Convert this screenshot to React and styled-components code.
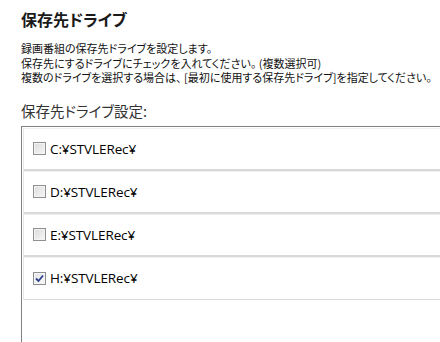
import React from 'react'
import styled, { createGlobalStyle } from 'styled-components'

const GlobalStyle = createGlobalStyle`
  html, body {
    margin: 0;
    padding: 0;
    background: #fff;
    overflow: hidden;
  }
  body {
    font-family: "Noto Sans CJK JP", "Noto Sans", sans-serif;
  }
`

const drives = [
  { path: 'C:¥STVLERec¥', checked: false },
  { path: 'D:¥STVLERec¥', checked: false },
  { path: 'E:¥STVLERec¥', checked: false },
  { path: 'H:¥STVLERec¥', checked: true },
]

const App = () => {
  return (
    <>
      <GlobalStyle />
      <Page>
        <Title>保存先ドライブ</Title>
        <Description>
          <p>録画番組の保存先ドライブを設定します。</p>
          <p>保存先にするドライブにチェックを入れてください。 (複数選択可)</p>
          <p>複数のドライブを選択する場合は、 [最初に使用する保存先ドライブ]を指定してください。</p>
        </Description>
        <SectionLabel>保存先ドライブ設定:</SectionLabel>
        <ListBox>
          {drives.map((d, i) => (
            <Item key={d.path} last={i === drives.length - 1}>
              <CheckBox checked={d.checked}>
                {d.checked && (
                  <svg width="9" height="9" viewBox="0 0 9 9">
                    <path d="M1 4.5 L3.5 7 L8 1.5" fill="none" stroke="#2b3f8c" strokeWidth="1.8" />
                  </svg>
                )}
              </CheckBox>
              <DriveName>{d.path}</DriveName>
            </Item>
          ))}
        </ListBox>
      </Page>
    </>
  )
}
export default App

const Page = styled.div`
  width: 440px;
  height: 342px;
  padding: 8px 0 0 21px;
  box-sizing: border-box;
  overflow: hidden;
`

const Title = styled.h1`
  margin: 0;
  font-size: 16px;
  line-height: 22px;
  font-weight: 700;
  color: #1a1a1a;
  font-feature-settings: "palt";
`

const Description = styled.div`
  margin-top: 11px;
  font-size: 11px;
  line-height: 14.5px;
  color: #111;
  font-feature-settings: "palt";
  white-space: nowrap;
  p {
    margin: 0;
  }
`

const SectionLabel = styled.div`
  margin-top: 16px;
  font-size: 14.5px;
  line-height: 19px;
  color: #333;
  font-feature-settings: "palt";
`

const ListBox = styled.div`
  margin-top: 6px;
  width: 440px;
  height: 240px;
  border-top: 1px solid #828282;
  border-left: 1px solid #828282;
  padding: 1px 0 0 1px;
  box-sizing: border-box;
  background: #fff;
`

const Item = styled.div`
  display: flex;
  align-items: center;
  gap: 4px;
  height: ${({ last }) => (last ? '41px' : '40px')};
  padding-left: 9px;
  border-top: 1px solid #f0f0f0;
  border-left: 1px solid #e8e8e8;
  border-bottom: ${({ last }) => (last ? '1px solid #dcdcdc' : '2px solid #d9d9d9')};
  box-sizing: content-box;
`

const CheckBox = styled.span`
  display: inline-flex;
  align-items: center;
  justify-content: center;
  width: 11px;
  height: 11px;
  border: 1px solid #8e8f8f;
  background: linear-gradient(135deg, #dcdcdc, #f6f6f6);
  box-shadow: inset 0 0 0 1px #f4f4f4;
  flex: none;
  ${({ checked }) => checked && 'background: linear-gradient(135deg, #e2e4ea, #fafafa);'}
`

const DriveName = styled.span`
  font-family: "Open Sans", "Noto Sans", sans-serif;
  font-size: 13.5px;
  color: #000;
  letter-spacing: -0.1px;
`
